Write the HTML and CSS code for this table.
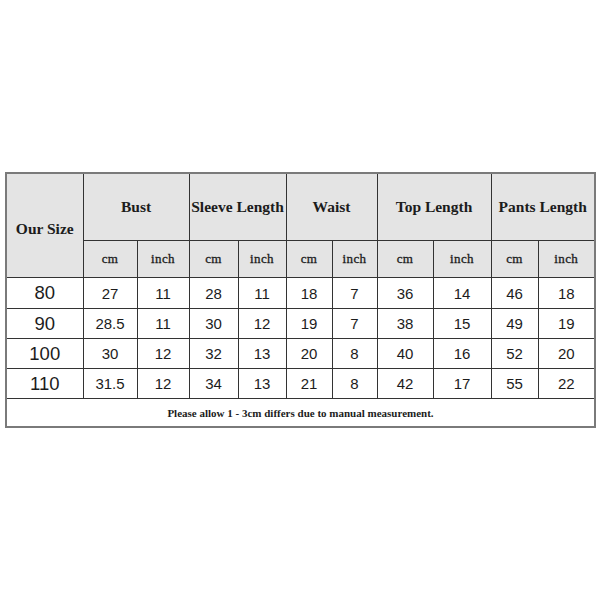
FILE: index.html
```html
<!DOCTYPE html>
<html>
<head>
<meta charset="utf-8">
<link rel="stylesheet" href="styles.css">
</head>
<body>
<div class="page">
<table class="chart">
<colgroup>
<col style="width:77px"><col style="width:54px"><col style="width:52px"><col style="width:49px"><col style="width:48px"><col style="width:46px"><col style="width:45px"><col style="width:56px"><col style="width:58px"><col style="width:47px"><col style="width:57px">
</colgroup>
<thead>
<tr class="h1">
<th rowspan="2" class="size-head">Our Size</th>
<th colspan="2">Bust</th>
<th colspan="2">Sleeve Length</th>
<th colspan="2">Waist</th>
<th colspan="2">Top Length</th>
<th colspan="2">Pants Length</th>
</tr>
<tr class="h2">
<th>cm</th><th>inch</th><th>cm</th><th>inch</th><th>cm</th><th>inch</th><th>cm</th><th>inch</th><th>cm</th><th>inch</th>
</tr>
</thead>
<tbody>
<tr class="r1"><td class="size">80</td><td>27</td><td>11</td><td>28</td><td>11</td><td>18</td><td>7</td><td>36</td><td>14</td><td>46</td><td>18</td></tr>
<tr><td class="size">90</td><td>28.5</td><td>11</td><td>30</td><td>12</td><td>19</td><td>7</td><td>38</td><td>15</td><td>49</td><td>19</td></tr>
<tr><td class="size">100</td><td>30</td><td>12</td><td>32</td><td>13</td><td>20</td><td>8</td><td>40</td><td>16</td><td>52</td><td>20</td></tr>
<tr><td class="size">110</td><td>31.5</td><td>12</td><td>34</td><td>13</td><td>21</td><td>8</td><td>42</td><td>17</td><td>55</td><td>22</td></tr>
<tr class="note"><td colspan="11">Please allow 1 - 3cm differs due to manual measurement.</td></tr>
</tbody>
</table>
</div>
</body>
</html>
```
FILE: styles.css
```css
html, body {
  margin: 0;
  padding: 0;
  background: #ffffff;
}
.page {
  width: 600px;
  height: 600px;
  padding: 172px 0 0 5px;
  box-sizing: border-box;
}
.chart {
  width: 589px;
  table-layout: fixed;
  border-collapse: collapse;
  border: 2px solid #7a7a7a;
  color: #1c1c1c;
}
.chart th, .chart td {
  border: 1px solid #333333;
  padding: 0;
  text-align: center;
  vertical-align: middle;
  overflow: hidden;
  white-space: nowrap;
}
.chart th {
  background: #e4e4e4;
  font-family: "Liberation Serif", "Times New Roman", serif;
}
.h1 th {
  height: 66px;
  font-size: 15.5px;
  font-weight: bold;
}
.h1 th.size-head {
  padding-top: 6px;
  font-size: 15.5px;
}
.h2 th {
  height: 36px;
  font-size: 13px;
  font-weight: normal;
  letter-spacing: 0.4px;
  -webkit-text-stroke: 0.3px #1c1c1c;
}
.chart td {
  height: 29px;
  font-family: "Liberation Sans", Arial, sans-serif;
  font-size: 15px;
}
.chart td.size {
  font-size: 18.5px;
}
.r1 td {
  height: 30px;
}
.note td {
  height: 27px;
  font-family: "Liberation Serif", "Times New Roman", serif;
  font-weight: bold;
  font-size: 11px;
  border-color: #7a7a7a;
}
```
